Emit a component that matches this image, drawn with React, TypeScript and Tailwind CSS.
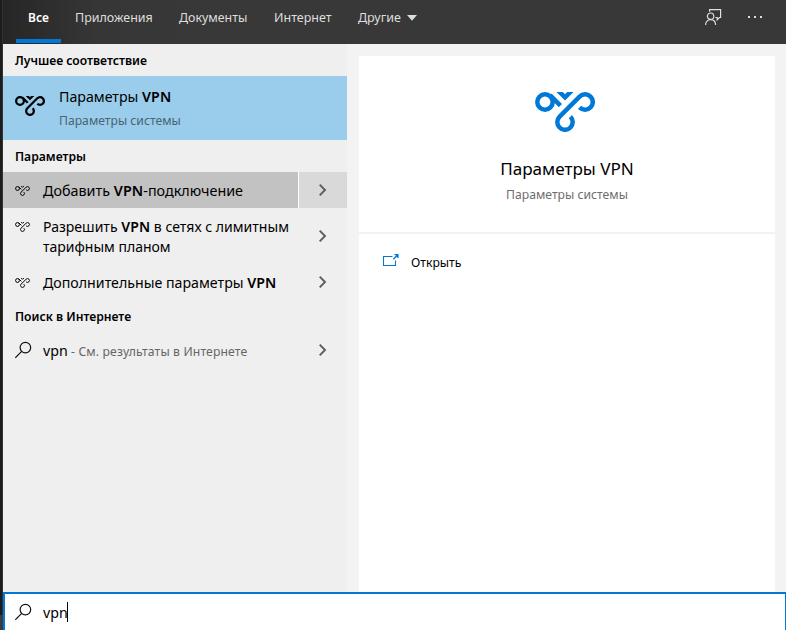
import type { ReactNode } from "react";

function VpnIcon({ className, stroke = 4.5 }: { className: string; stroke?: number }) {
  return (
    <svg viewBox="0 0 60 40" className={className} fill="none" stroke="currentColor" strokeWidth={stroke}>
      <circle cx="10" cy="10" r="7.7" />
      <path d="M15 3.2L25.4 13.6" />
      <path d="M22 -2.6L30 5.4L38 -2.6" />
      <path d="M35.4 24.6A7.7 7.7 0 1 1 24.6 24.6L44.6 4.6A7.7 7.7 0 1 1 44.6 15.4" />
    </svg>
  );
}

function SearchIcon() {
  return (
    <svg viewBox="0 0 18 18" className="h-[18px] w-[18px] shrink-0" fill="none" stroke="#111" strokeWidth="1.2">
      <circle cx="10.4" cy="6.6" r="5.3" />
      <path d="M6.7 10.4L.3 16.8" />
    </svg>
  );
}

function Chevron() {
  return (
    <svg viewBox="0 0 8 12" className="h-3 w-2" fill="none" stroke="#5c5c5c" strokeWidth="1.9">
      <path d="M.7 .7L6 6L.7 11.3" />
    </svg>
  );
}

function SectionLabel({ children }: { children: ReactNode }) {
  return <h2 className="flex h-8 items-center pt-[2px] pl-3 text-[12.15px] font-semibold">{children}</h2>;
}

function Result({ children, selected = false, tall = false }: { children: ReactNode; selected?: boolean; tall?: boolean }) {
  return (
    <div className={`flex text-[14.2px] leading-5 ${tall ? "h-14" : "h-9"}`}>
      <div className={`flex w-[295px] pl-3 pt-[9px] ${selected ? "bg-[#c2c2c2]" : ""}`}>
        <VpnIcon className="mt-[5px] h-[10px] w-[15px] shrink-0" stroke={4} />
        <div className="ml-[13px] whitespace-nowrap">{children}</div>
      </div>
      <div className={`ml-px flex flex-1 items-center justify-center ${selected ? "bg-[#d9d9d9] shadow-[-1px_0_0_#fff]" : ""}`}>
        <Chevron />
      </div>
    </div>
  );
}

function Vpn() {
  return <span className="font-semibold tracking-[0.1px]">VPN</span>;
}

export default function App() {
  return (
    <div className="flex h-[630px] w-[786px] overflow-hidden bg-[#f3f3f3] font-['Noto_Sans','Open_Sans',sans-serif] text-black">
      <div className="flex w-[3px] shrink-0 flex-col bg-[#1c1c1c]">
        <div className="flex-1 border-r border-[#333]" />
        <div className="h-[15px] bg-[#3c3c3c]" />
      </div>
      <div className="flex min-w-0 flex-1 flex-col">
        <header className="flex h-11 shrink-0 justify-between bg-linear-to-r from-[#262626] via-[#363636] via-12% to-[#383838] to-25% text-[12.5px] leading-[18px] text-[#dedede]">
          <nav className="flex pl-[13px]">
            <div className="flex w-[45px] flex-col items-center justify-between pt-[9px] pb-px text-[12px] font-semibold text-white">
              Все
              <div className="h-1 w-full bg-[#0078d7]" />
            </div>
            <span className="ml-[14px] w-[104px] pt-[9px]">Приложения</span>
            <span className="w-[95px] pt-[9px] text-[12.4px]">Документы</span>
            <span className="w-[84px] pt-[9px]">Интернет</span>
            <span className="flex items-start gap-[6px] pt-[9px]">
              Другие
              <svg viewBox="0 0 10 6" className="mt-[6px] h-[6px] w-[10px]" fill="#dedede">
                <path d="M0 0H10L5 5.7Z" />
              </svg>
            </span>
          </nav>
          <div className="flex pr-6">
            <svg viewBox="0 0 17 17" className="mt-[9px] mr-[26px] h-[17px] w-[17px]" fill="none" stroke="#dedede" strokeWidth="1.2">
              <circle cx="5.6" cy="7.2" r="3.2" />
              <path d="M.6 16C.6 12.8 2.6 10.6 5.6 10.6S10.6 12.8 10.6 16" />
              <path d="M4.6 2.7V.6H15.6V8.5H14.4L12.2 10.8V8.5H10.4" />
            </svg>
            <div className="flex gap-1 pt-4">
              <i className="h-[2px] w-[2px] bg-[#dedede]" />
              <i className="h-[2px] w-[2px] bg-[#dedede]" />
              <i className="h-[2px] w-[2px] bg-[#dedede]" />
            </div>
          </div>
        </header>

        <div className="flex min-h-0 flex-1">
          <aside className="w-[344px] shrink-0 bg-[#efefef]">
            <SectionLabel>Лучшее соответствие</SectionLabel>
            <div className="flex h-16 bg-[#99cdeb] pl-3">
              <VpnIcon className="mt-[20px] h-5 w-[30px]" />
              <div className="ml-[14px] pt-[11px]">
                <div className="text-[14.2px] leading-5">Параметры <Vpn /></div>
                <div className="mt-[5px] text-[12.2px] leading-[18px] text-[#4a6473]">Параметры системы</div>
              </div>
            </div>
            <SectionLabel>Параметры</SectionLabel>
            <Result selected>
              <span className="text-[14.35px]">Добавить <Vpn />-подключение</span>
            </Result>
            <Result tall>
              <div className="text-[14.05px]">Разрешить <Vpn /> в сетях с лимитным</div>
              <div className="text-[14px]">тарифным планом</div>
            </Result>
            <Result>Дополнительные параметры <Vpn /></Result>
            <SectionLabel>Поиск в Интернете</SectionLabel>
            <div className="flex h-9">
              <div className="flex w-[296px] pt-[9px] pl-3 leading-5">
                <SearchIcon />
                <div className="ml-[10px] text-[14.2px]">
                  vpn<span className="text-[12.2px] tracking-[0.14px] text-[#666]"> - См. результаты в Интернете</span>
                </div>
              </div>
              <div className="flex flex-1 items-center justify-center">
                <Chevron />
              </div>
            </div>
          </aside>
          <main className="mt-3 mr-[11px] ml-3 flex flex-1 flex-col bg-white">
            <section className="flex h-[178px] flex-col items-center border-b-2 border-[#f2f2f2] pt-9">
              <VpnIcon className="-ml-1 h-10 w-[60px] text-[#0078d7]" />
              <h1 className="mt-[25px] text-[17.1px] leading-6">Параметры VPN</h1>
              <p className="mt-[5px] text-[12.2px] leading-[18px] text-[#6e6e6e]">Параметры системы</p>
            </section>
            <div className="flex pt-5 pl-6">
              <svg viewBox="0 0 16 12" className="h-3 w-4" fill="none" stroke="#0078d7" strokeWidth="1.1">
                <path d="M9.5 2.5H.5V11.5H12.5V6.5" />
                <path d="M10.3 5.2L14.3 1.2M11.5 .6H14.9V4" strokeWidth="1.3" />
              </svg>
              <span className="ml-3 text-[12.2px] leading-[18px]">Открыть</span>
            </div>
          </main>
        </div>

        <div className="flex h-[38px] shrink-0 border-t-2 border-r border-l-2 border-[#0078d7] bg-white pt-[9px] pl-[10px]">
          <SearchIcon />
          <span className="ml-[10px] text-[14.2px] leading-5">vpn</span>
          <i className="-mt-px -ml-px h-5 w-px bg-black" />
        </div>
      </div>
    </div>
  );
}
